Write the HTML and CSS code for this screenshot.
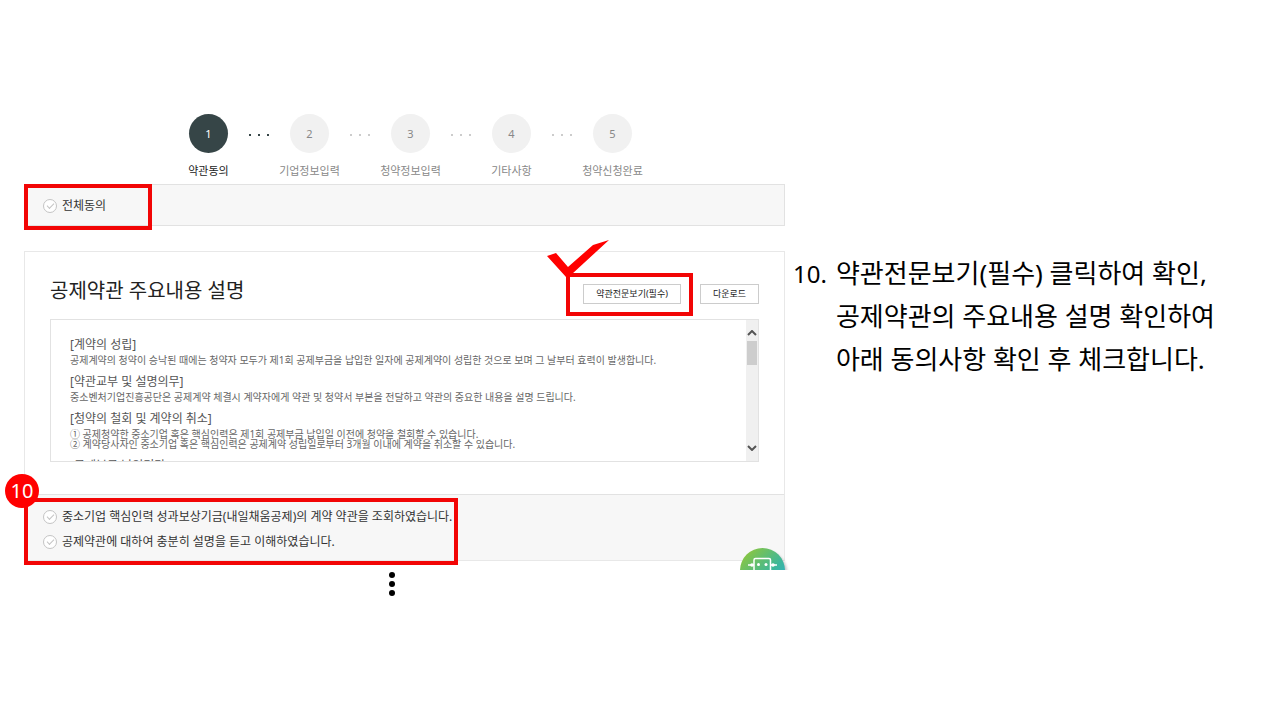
FILE: index.html
```html
<!DOCTYPE html>
<html lang="ko">
<head>
  <meta charset="UTF-8">
  <meta name="viewport" content="width=device-width, initial-scale=1">
  <title>약관동의</title>
  <link rel="stylesheet" href="styles.css">
</head>
<body>

  <main class="slide">
    <div class="screen">

      <ol class="steps">
        <li class="step active"><span class="num">1</span>약관동의</li>
        <li class="dots active" aria-hidden="true"><i></i><i></i><i></i></li>
        <li class="step"><span class="num">2</span>기업정보입력</li>
        <li class="dots" aria-hidden="true"><i></i><i></i><i></i></li>
        <li class="step"><span class="num">3</span>청약정보입력</li>
        <li class="dots" aria-hidden="true"><i></i><i></i><i></i></li>
        <li class="step"><span class="num">4</span>기타사항</li>
        <li class="dots" aria-hidden="true"><i></i><i></i><i></i></li>
        <li class="step"><span class="num">5</span>청약신청완료</li>
      </ol>

      <div class="agree-all">
        <label class="check"><input type="checkbox">전체동의</label>
        <div class="mark mark-all"></div>
      </div>

      <section class="card">
        <div class="card-body">
          <header class="card-head">
            <h2>공제약관 주요내용 설명</h2>
            <div class="buttons">
              <div class="marked">
                <button type="button">약관전문보기(필수)</button>
                <div class="mark mark-button"></div>
                <svg class="tick" viewBox="0 0 62 38" aria-hidden="true">
                  <path d="M0 16 L9 13 L21 27 L46 5 L62 0 L25 34 L25 37 L19 37 Z" fill="#f00"/>
                </svg>
              </div>
              <button type="button">다운로드</button>
            </div>
          </header>

          <div class="terms">
            <div class="terms-text">
              <h3>[계약의 성립]</h3>
              <p>공제계약의 청약이 승낙된 때에는 청약자 모두가 제1회 공제부금을 납입한 일자에 공제계약이 성립한 것으로 보며 그 날부터 효력이 발생합니다.</p>
              <h3>[약관교부 및 설명의무]</h3>
              <p>중소벤처기업진흥공단은 공제계약 체결시 계약자에게 약관 및 청약서 부본을 전달하고 약관의 중요한 내용을 설명 드립니다.</p>
              <h3>[청약의 철회 및 계약의 취소]</h3>
              <ul>
                <li>① 공제청약한 중소기업 혹은 핵심인력은 제1회 공제부금 납입일 이전에 청약을 철회할 수 있습니다.</li>
                <li>② 계약당사자인 중소기업 혹은 핵심인력은 공제계약 성립일로부터 3개월 이내에 계약을 취소할 수 있습니다.</li>
              </ul>
              <h3>[공제부금 납입기간]</h3>
            </div>
            <div class="scrollbar" aria-hidden="true">
              <svg viewBox="0 0 10 6"><path d="M1 5 L5 1 L9 5" /></svg>
              <div class="thumb"></div>
              <svg viewBox="0 0 10 6"><path d="M1 1 L5 5 L9 1" /></svg>
            </div>
          </div>
        </div>

        <div class="card-foot">
          <label class="check"><input type="checkbox">중소기업 핵심인력 성과보상기금(내일채움공제)의 계약 약관을 조회하였습니다.</label>
          <label class="check"><input type="checkbox">공제약관에 대하여 충분히 설명을 듣고 이해하였습니다.</label>
          <div class="mark mark-foot"></div>
          <span class="badge">10</span>
        </div>

        <svg class="chatbot" viewBox="0 0 50 22" aria-hidden="true">
          <defs>
            <linearGradient id="bot" x1="0" y1="0" x2="1" y2="1">
              <stop offset="0.1" stop-color="#8cc63f"/>
              <stop offset="0.6" stop-color="#3db79a"/>
              <stop offset="1" stop-color="#29abe2"/>
            </linearGradient>
            <filter id="shade" x="-20%" y="-20%" width="140%" height="140%"><feGaussianBlur stdDeviation="1.5"/></filter>
          </defs>
          <circle cx="25" cy="25" r="22" fill="#000" opacity="0.25" filter="url(#shade)"/>
          <circle cx="22.5" cy="22.5" r="22.5" fill="url(#bot)"/>
          <g fill="none" stroke="#fff" stroke-width="1.5">
            <path d="M14 22 V12 Q14 10.500 15.500 10.500 H29 Q30.500 10.500 30.500 12 V22"/>
            <path d="M8 17 H14 M30.500 17 H37"/>
          </g>
          <g fill="#fff">
            <circle cx="18.500" cy="16.500" r="1.500"/><circle cx="26" cy="16.500" r="1.500"/>
            <circle cx="12" cy="17" r="1.800"/><circle cx="33" cy="17" r="1.800"/>
          </g>
        </svg>
      </section>

      <div class="more" aria-hidden="true"><i></i><i></i><i></i></div>
    </div>

    <aside class="guide">
      <span class="guide-num">10.</span>
      <p>약관전문보기(필수) 클릭하여 확인,<br>공제약관의 주요내용 설명 확인하여<br>아래 동의사항 확인 후 체크합니다.</p>
    </aside>
  </main>

</body>
</html>
```
FILE: styles.css
```css
* {
  box-sizing: border-box;
}

body {
  margin: 0;
  background: #fff;
  color: #333;
  font-family: "Noto Sans", "Noto Sans CJK KR", sans-serif;
}

h2, h3, p, ul, ol {
  margin: 0;
  padding: 0;
  font-weight: normal;
  list-style: none;
}

.slide {
  display: flex;
  gap: 8px;
  padding: 114px 55px 0 24px;
}

.screen {
  flex: 1;
  min-width: 0;
}

/* step indicator */
.steps {
  display: flex;
  justify-content: center;
  height: 70px;
  padding-left: 12px;
}

.step {
  display: flex;
  flex-direction: column;
  align-items: center;
  gap: 9px;
  width: 62px;
  font-size: 11px;
  line-height: 18px;
  white-space: nowrap;
  color: #888;
}

.step.active {
  color: #222;
}

.num {
  width: 39px;
  height: 39px;
  border-radius: 50%;
  background: #f1f1f1;
  line-height: 40px;
  text-align: center;
}

.active .num {
  background: #364547;
  color: #fff;
}

.dots {
  display: flex;
  justify-content: center;
  align-items: center;
  gap: 7px;
  width: 39px;
  height: 42px;
}

.dots i {
  width: 2px;
  height: 2px;
  background: #ccc;
}

.dots.active i {
  background: #364547;
}

/* checkboxes */
.check {
  display: flex;
  align-items: center;
  gap: 5px;
  font-size: 12px;
  line-height: 25px;
  color: #333;
}

.check input {
  appearance: none;
  display: grid;
  place-items: center;
  width: 14px;
  height: 14px;
  margin: 0;
  border: 1px solid #c4c4c4;
  border-radius: 50%;
  background: #fff;
}

.check input::before {
  content: "";
  width: 6px;
  height: 3px;
  margin-top: -2px;
  border: solid #c4c4c4;
  border-width: 0 0 1px 1px;
  transform: rotate(-45deg);
}

.agree-all {
  position: relative;
  padding: 8px 18px 7px;
  border: 1px solid #e2e2e2;
  background: #f7f7f7;
}

/* terms card */
.card {
  position: relative;
  margin-top: 25px;
  border: 1px solid #e8e8e8;
}

.card-body {
  padding: 24px 25px 32px;
}

.card-head {
  display: flex;
  justify-content: space-between;
  height: 43px;
}

.card-head h2 {
  font-size: 20px;
  line-height: 30px;
  color: #222;
}

.buttons {
  display: flex;
  align-items: flex-start;
  gap: 19px;
  padding-top: 8px;
}

.marked {
  position: relative;
  display: flex;
}

.buttons button {
  height: 20px;
  padding: 0 12px;
  border: 1px solid #ccc;
  background: #fff;
  color: #222;
  font-family: inherit;
  font-size: 9px;
  line-height: 18px;
}

.terms {
  display: flex;
  height: 143px;
  border: 1px solid #e2e2e2;
  overflow: hidden;
}

.terms-text {
  flex: 1;
  padding: 16px 19px 0;
  color: #666;
  font-size: 10px;
  line-height: 14px;
}

.terms-text h3 {
  font-size: 12px;
  line-height: 17px;
  color: #555;
}

.terms-text p {
  margin-bottom: 6px;
}

.terms-text ul {
  padding: 2px 0 8px;
  line-height: 10px;
}

.scrollbar {
  display: flex;
  flex-direction: column;
  align-items: center;
  width: 12px;
  padding: 10px 0;
  background: #f0f0f0;
}

.scrollbar svg {
  width: 10px;
  height: 6px;
  fill: none;
  stroke: #555;
  stroke-width: 2;
}

.scrollbar svg:last-child {
  margin-top: auto;
}

.thumb {
  width: 10px;
  height: 24px;
  margin-top: 5px;
  background: #cdcdcd;
}

.card-foot {
  position: relative;
  padding: 9px 18px 6px;
  border-top: 1px solid #e2e2e2;
  background: #f7f7f7;
}

/* red highlights drawn over the screen */
.mark {
  position: absolute;
  border: 4px solid #f20505;
  pointer-events: none;
}

.mark-all {
  top: -1px;
  left: -1px;
  width: 128px;
  height: 46px;
}

.mark-button {
  inset: -11px -12px -12px -17px;
}

.mark-foot {
  top: 3px;
  left: -1px;
  width: 434px;
  height: 67px;
}

.tick {
  position: absolute;
  top: -44px;
  left: -36px;
  width: 62px;
  height: 38px;
}

.badge {
  position: absolute;
  top: -21px;
  left: -20px;
  width: 34px;
  height: 34px;
  border-radius: 50%;
  background: #f00;
  color: #fff;
  font-size: 20px;
  line-height: 34px;
  text-align: center;
}

.chatbot {
  position: absolute;
  right: -6px;
  bottom: -10px;
  width: 50px;
  height: 22px;
}

.more {
  display: flex;
  flex-direction: column;
  gap: 3px;
  width: fit-content;
  margin: 11px auto 0;
  padding-right: 25px;
}

.more i {
  width: 6px;
  height: 6px;
  border-radius: 50%;
  background: #000;
}

/* instruction text */
.guide {
  display: flex;
  flex: 0 0 432px;
  gap: 9px;
  padding-top: 138px;
  font-size: 26px;
  line-height: 43px;
  white-space: nowrap;
  color: #000;
}

.guide-num {
  font-size: 24px;
}
```
